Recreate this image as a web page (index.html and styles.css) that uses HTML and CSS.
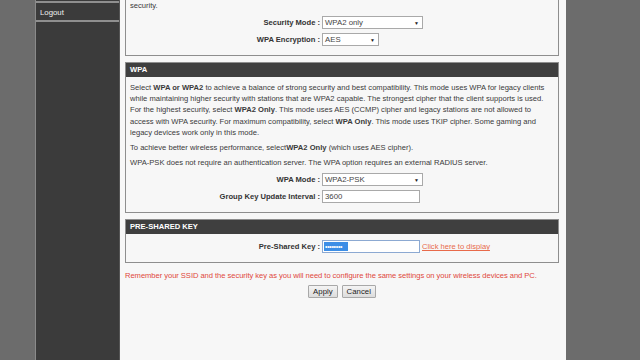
FILE: index.html
```html
<!DOCTYPE html>
<html>
<head>
<meta charset="utf-8">
<link rel="stylesheet" href="styles.css">
</head>
<body>
<div class="frame">
  <aside class="sidebar">
    <div class="nav-item nav-prev"></div>
    <div class="nav-item">Logout</div>
  </aside>
  <main class="content">
    <section class="box box-top">
      <p class="line">security.</p>
      <div class="form">
        <label class="lbl">Security Mode :</label>
        <div class="select w100"><span>WPA2 only</span><i>&#9660;</i></div>
        <label class="lbl">WPA Encryption :</label>
        <div class="select w56"><span>AES</span><i>&#9660;</i></div>
      </div>
    </section>

    <section class="box">
      <h2 class="hdr">WPA</h2>
      <div class="body">
        <p>Select <b>WPA or WPA2</b> to achieve a balance of strong security and best compatibility. This mode uses WPA for legacy clients<br>while maintaining higher security with stations that are WPA2 capable. The strongest cipher that the client supports is used.<br>For the highest security, select <b>WPA2 Only</b>. This mode uses AES (CCMP) cipher and legacy stations are not allowed to<br>access with WPA security. For maximum compatibility, select <b>WPA Only</b>. This mode uses TKIP cipher. Some gaming and<br>legacy devices work only in this mode.</p>
        <p>To achieve better wireless performance, select<b>WPA2 Only</b> (which uses AES cipher).</p>
        <p>WPA-PSK does not require an authentication server. The WPA option requires an external RADIUS server.</p>
        <div class="form form-wpa">
          <label class="lbl">WPA Mode :</label>
          <div class="select w100"><span>WPA2-PSK</span><i>&#9660;</i></div>
          <label class="lbl">Group Key Update Interval :</label>
          <div class="input w98">3600</div>
        </div>
      </div>
    </section>

    <section class="box">
      <h2 class="hdr">PRE-SHARED KEY</h2>
      <div class="form form-psk">
        <label class="lbl">Pre-Shared Key :</label>
        <div class="psk-row">
          <div class="input w98 focus"><span class="sel">&#8226;&#8226;&#8226;&#8226;&#8226;&#8226;&#8226;&#8226;</span></div>
          <a class="link" href="#">Click here to display</a>
        </div>
      </div>
    </section>

    <p class="note">Remember your SSID and the security key as you will need to configure the same settings on your wireless devices and PC.</p>

    <div class="buttons">
      <button class="btn">Apply</button>
      <button class="btn">Cancel</button>
    </div>
  </main>
</div>
</body>
</html>
```

FILE: styles.css
```css
* { box-sizing: border-box; }
html, body { margin: 0; padding: 0; }
body {
  background: #6c6c6c;
  width: 640px;
  height: 360px;
  overflow: hidden;
  font-family: "Liberation Sans", Arial, sans-serif;
  font-size: 7.6px;
  color: #3a3a3a;
}
.frame {
  display: flex;
  height: 360px;
  padding-left: 35px;
}
.sidebar {
  width: 85px;
  background: #3b3b3b;
  border-left: 1px solid #8a8a8a;
  border-right: 1px solid #555;
}
.nav-item {
  height: 19px;
  border-bottom: 2px solid #8f8f8f;
  color: #f0f0f0;
  font-size: 7.8px;
  padding: 5px 0 0 4px;
}
.nav-prev { height: 3px; padding: 0; }
.content {
  width: 446px;
  background: #f7f7f7;
  padding: 0 7px 0 5px;
}
.box {
  border: 1px solid #8e8e8e;
  background: #f7f7f7;
  margin-bottom: 6px;
}
.box-top { border-top: 0; padding: 0 4px 9px; }
.line { margin: 0; line-height: 11px; }
.hdr {
  margin: 0;
  height: 14px;
  background: #3f3f3f;
  color: #fff;
  font-size: 7.6px;
  font-weight: bold;
  line-height: 14px;
  padding-left: 4px;
}
.body { padding: 5px 4px 9px; }
.body p { margin: 0 0 4px; line-height: 11.2px; white-space: nowrap; }
.form {
  display: grid;
  grid-template-columns: 190px auto;
  column-gap: 2px;
  row-gap: 4px;
  align-items: center;
  margin-top: 5px;
}
.form-wpa { margin-top: 5px; }
.form-psk { margin: 0; padding: 6px 4px 9px; }
.lbl {
  text-align: right;
  font-weight: bold;
  color: #333;
}
.select, .input {
  height: 13px;
  background: #fff;
  border: 1px solid #a9a9a9;
  display: flex;
  align-items: center;
  padding: 0 3px 0 2px;
  font-size: 7.8px;
  color: #444;
}
.select span { flex: 1; }
.select i { font-style: normal; font-size: 5px; color: #222; }
.w100 { width: 101px; }
.w56 { width: 57px; }
.w98 { width: 98px; }
.psk-row { display: flex; align-items: center; gap: 2px; }
.focus { border-color: #8ca9d2; padding-left: 1px; }
.sel {
  display: inline-block;
  width: 24px;
  height: 9px;
  background: #3d8ee6;
  color: #fff;
  font-size: 7px;
  line-height: 9px;
  padding: 0 1px;
  letter-spacing: -0.3px;
  overflow: hidden;
}
.link { color: #e86a4a; text-decoration: underline; }
.note {
  margin: 7px 0 0;
  color: #e0473c;
  line-height: 11px;
  letter-spacing: -0.05px;
}
.buttons {
  display: flex;
  justify-content: center;
  gap: 4px;
  margin-top: 4px;
}
.btn {
  font-family: inherit;
  font-size: 7.8px;
  height: 13px;
  padding: 0 4px;
  color: #222;
  background: linear-gradient(#f4f4f4, #dcdcdc);
  border: 1px solid #a8a8a8;
  border-radius: 1px;
}
```
